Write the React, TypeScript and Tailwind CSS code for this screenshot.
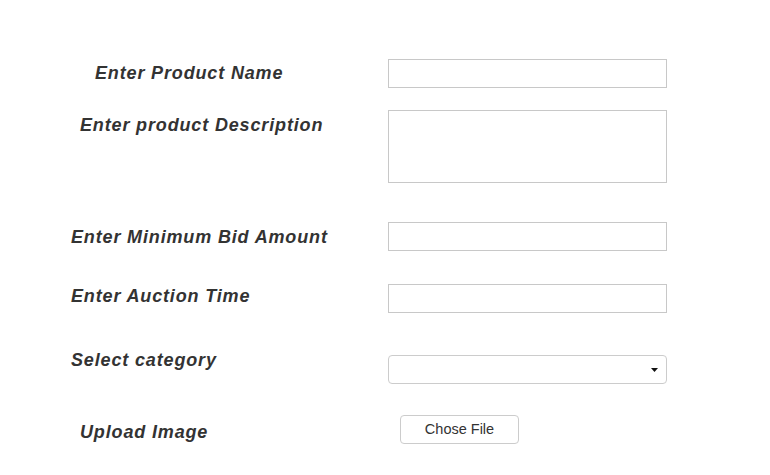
export default function App() {
  const label = "text-[18px] leading-6 font-bold italic text-[#333] tracking-[0.85px]"
  return (
    <main className="w-[770px] h-[475px] bg-white overflow-hidden font-['Liberation_Sans',Arial,sans-serif]">
      <form className="flex flex-col pt-[59px]">
        {/* product name */}
        <div className="flex items-start">
          <div className="w-[388px] pl-[95px] mt-[2px]">
            <span className={label}>Enter Product Name</span>
          </div>
          <input type="text" className="w-[279px] h-[29px] border border-[#c8c8c8] outline-none" />
        </div>

        {/* description */}
        <div className="flex items-start mt-[22px]">
          <div className="w-[388px] pl-[80px] mt-[3px]">
            <span className={label}>Enter product Description</span>
          </div>
          <textarea className="w-[279px] h-[73px] border border-[#c8c8c8] outline-none resize-none" />
        </div>

        {/* bid */}
        <div className="flex items-start mt-[39px]">
          <div className="w-[388px] pl-[71px] mt-[3px]">
            <span className={label}>Enter Minimum Bid Amount</span>
          </div>
          <input type="text" className="w-[279px] h-[29px] border border-[#c8c8c8] outline-none" />
        </div>

        {/* auction time */}
        <div className="flex items-start mt-[33px]">
          <div className="w-[388px] pl-[71px]">
            <span className={label}>Enter Auction Time</span>
          </div>
          <input type="text" className="w-[279px] h-[29px] border border-[#c8c8c8] outline-none" />
        </div>

        {/* category */}
        <div className="flex items-start mt-[35px]">
          <div className="w-[388px] pl-[71px]">
            <span className={label}>Select category</span>
          </div>
          <div className="relative mt-[7px] w-[279px] h-[29px] border border-[#cccccc] rounded-[4px] bg-white">
            <svg className="absolute right-[8px] top-[12px]" width="7" height="4" viewBox="0 0 7 4">
              <path d="M0 0h7L3.5 4z" fill="#111" />
            </svg>
          </div>
        </div>

        {/* upload */}
        <div className="flex items-start mt-[31px]">
          <div className="w-[388px] pl-[80px] mt-[5px]">
            <span className={label}>Upload Image</span>
          </div>
          <button
            type="button"
            className="ml-[12px] w-[119px] h-[29px] border border-[#cccccc] rounded-[4px] bg-white text-[14.5px] leading-[27px] text-[#333]"
          >
            Chose File
          </button>
        </div>
      </form>
    </main>
  )
}
